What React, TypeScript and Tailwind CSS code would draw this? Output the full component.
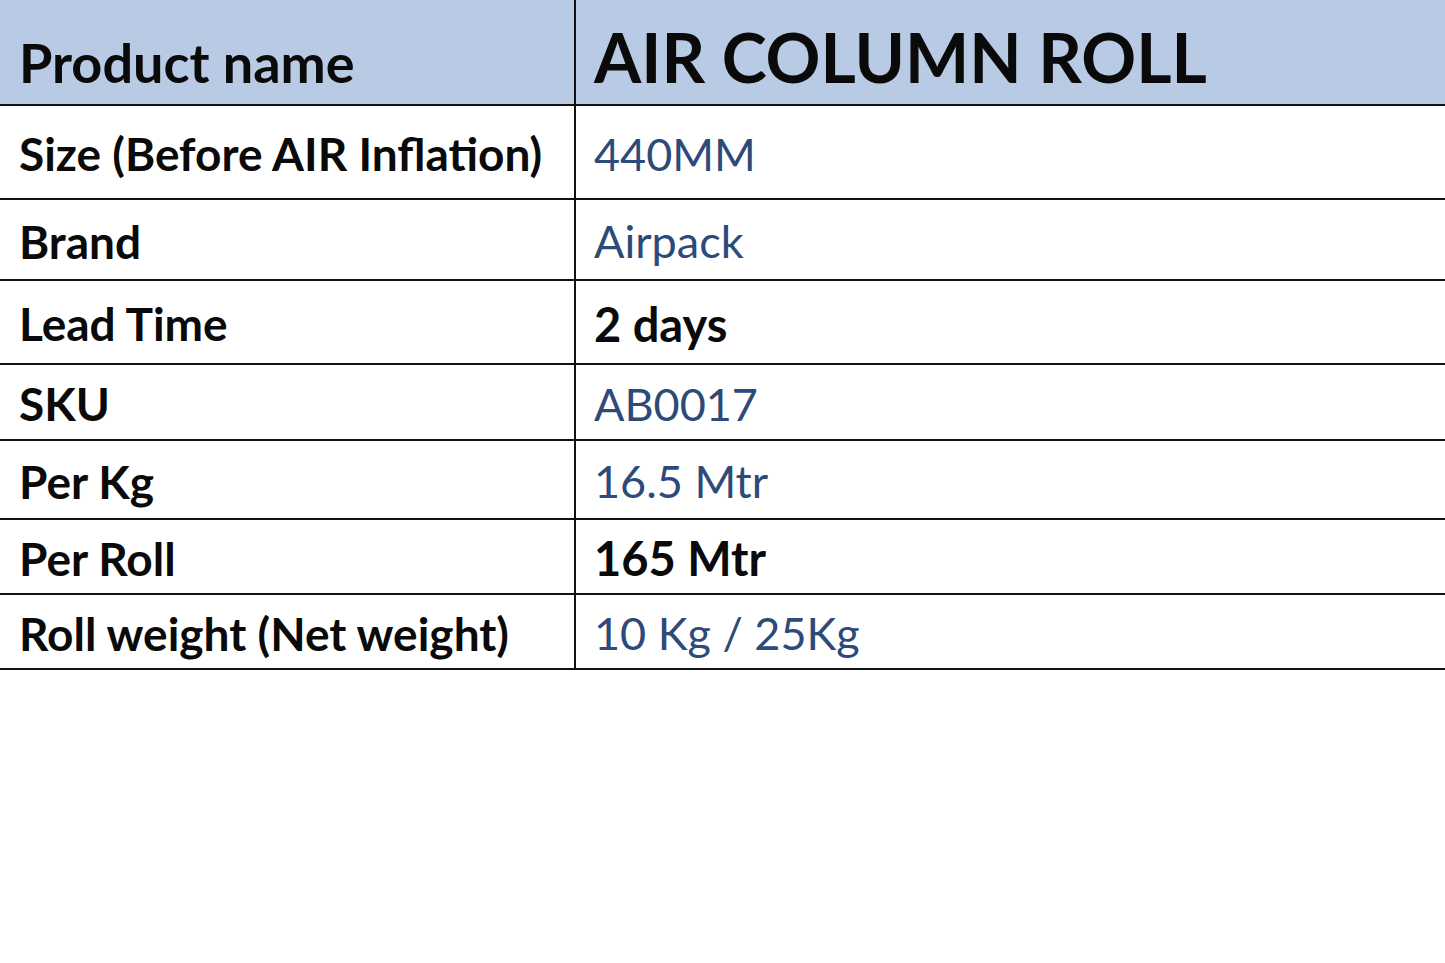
const rows = [
  { label: "Size (Before AIR Inflation)", value: "440MM", bold: false, h: "h-[94px]" },
  { label: "Brand", value: "Airpack", bold: false, h: "h-[81px]" },
  { label: "Lead Time", value: "2 days", bold: true, h: "h-[84px]" },
  { label: "SKU", value: "AB0017", bold: false, h: "h-[76px]" },
  { label: "Per Kg", value: "16.5 Mtr", bold: false, h: "h-[79px]" },
  { label: "Per Roll", value: "165 Mtr", bold: true, h: "h-[75px]" },
  { label: "Roll weight (Net weight)", value: "10 Kg / 25Kg", bold: false, h: "h-[75px]" },
];

export default function App() {
  return (
    <div className="min-h-[963px] w-full bg-white font-['Lato',sans-serif]">
      <div className="grid grid-cols-[576px_1fr]">
        <div className="flex h-[106px] items-end bg-[#b9cbe4] pb-[14px] pl-[19px] border-r-2 border-b-2 border-[#111]">
          <span className="text-[54px] font-bold leading-none text-[#0a0a0a]">Product name</span>
        </div>
        <div className="flex h-[106px] items-end bg-[#b9cbe4] pb-[13px] pl-[18px] border-b-2 border-[#111]">
          <span className="text-[68px] font-bold leading-none text-[#0a0a0a]">AIR COLUMN ROLL</span>
        </div>
        {rows.map((r) => (
          <div key={r.label} className="contents">
            <div className={`flex ${r.h} items-center pl-[19px] pt-[4px] border-r-2 border-b-2 border-[#111]`}>
              <span className="text-[46px] font-bold leading-none text-[#0a0a0a]">{r.label}</span>
            </div>
            <div className={`flex ${r.h} items-center pl-[18px] pt-[4px] border-b-2 border-[#111]`}>
              <span
                className={
                  r.bold
                    ? "text-[47px] font-bold leading-none text-[#0a0a0a]"
                    : "text-[45px] font-normal leading-none text-[#2d4a78]"
                }
              >
                {r.value}
              </span>
            </div>
          </div>
        ))}
      </div>
    </div>
  );
}
